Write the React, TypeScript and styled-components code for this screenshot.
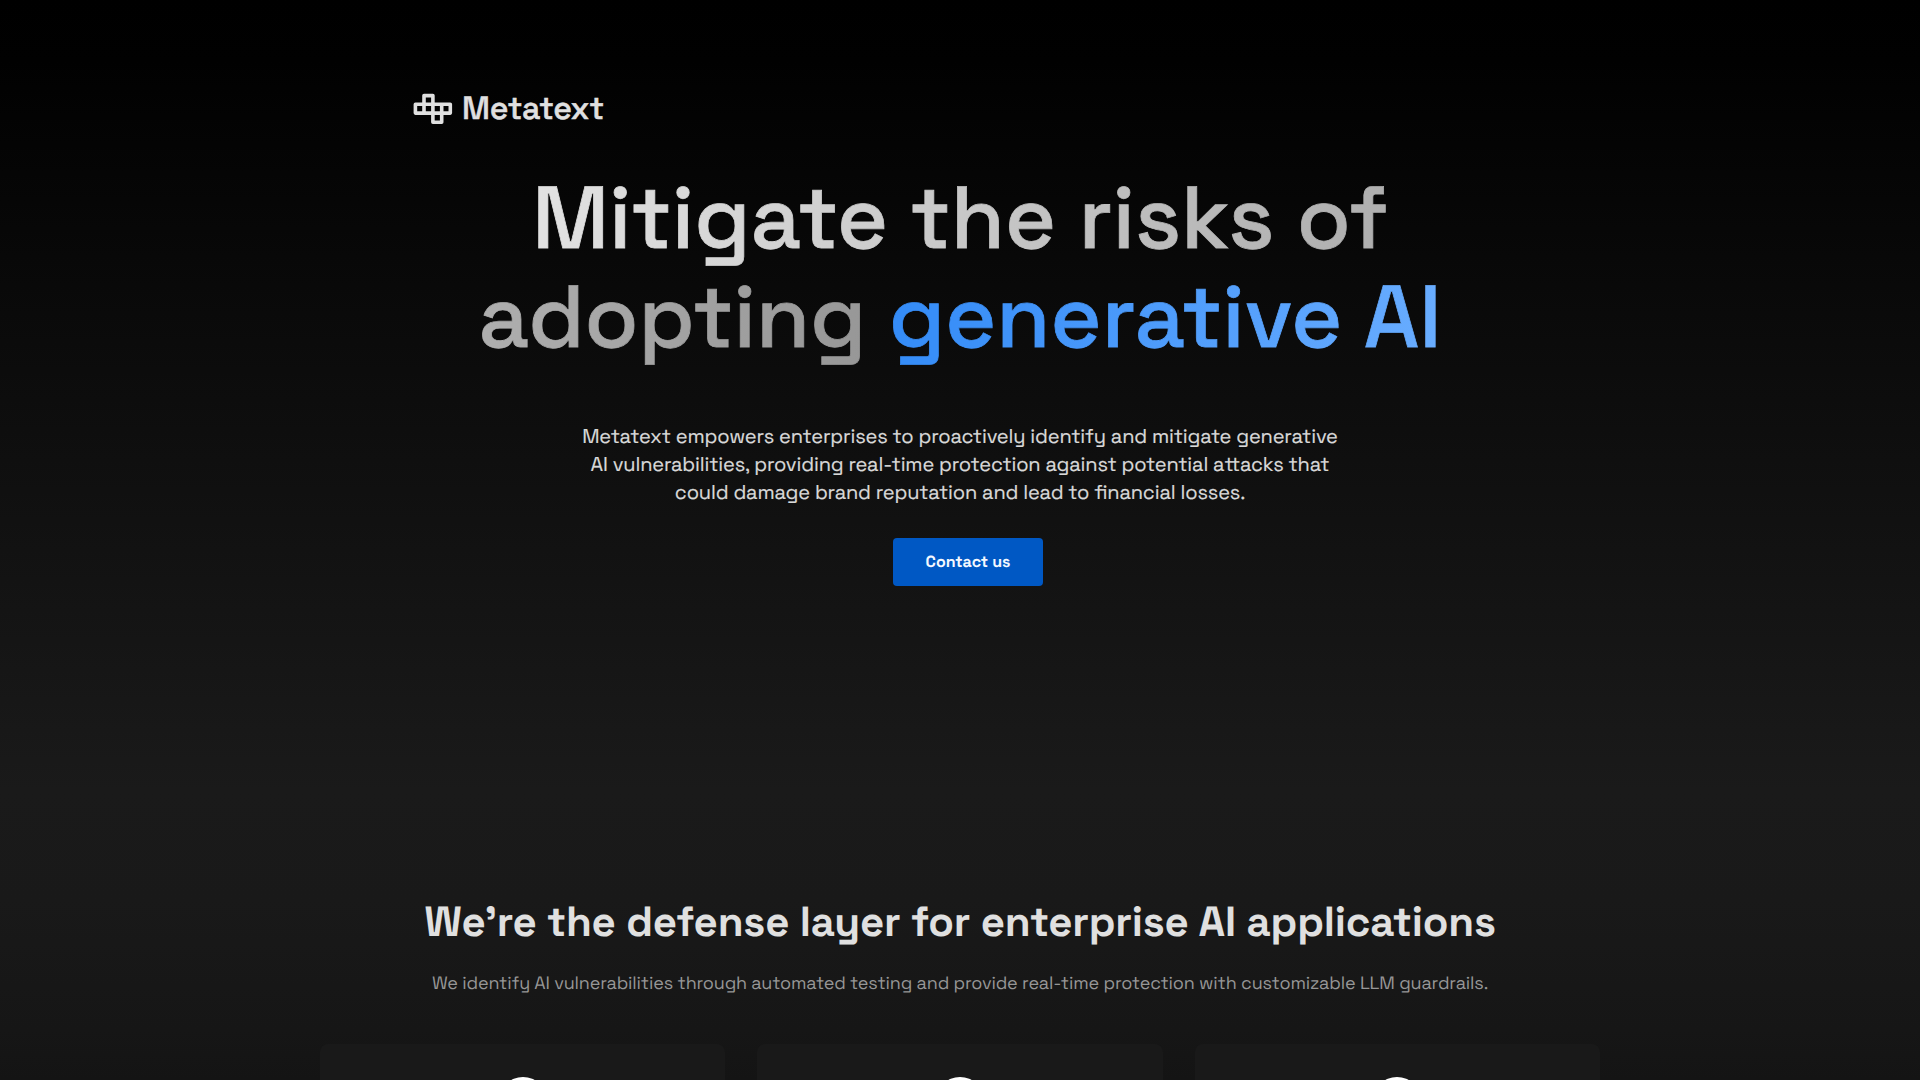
import styled, { createGlobalStyle } from "styled-components";

const GlobalStyle = createGlobalStyle`
  * {
    box-sizing: border-box;
  }

  body {
    margin: 0;
    background: #141414;
    color: #e0e0e0;
    font-family: "Space Grotesk", Inter, "Liberation Sans", sans-serif;
    /* keeps the tt / fi ligatures on tracked text */
    font-feature-settings: "liga" 1;
    text-rendering: geometricPrecision;
    overflow: hidden;
  }

  h1, h2, p {
    margin: 0;
  }
`;

// --- Page ---

const Page = styled.div`
  height: 1080px;
  overflow: hidden;
  background: linear-gradient(
    180deg,
    #000 0,
    #010101 60px,
    #0c0c0c 370px,
    #1a1a1a 790px,
    #191919 900px,
    #161616 1030px,
    #141414 1080px
  );
`;

// One line of centred copy
const Line = styled.span`
  display: block;
  white-space: nowrap;
`;

// --- Hero ---

const Hero = styled.header`
  display: flex;
  flex-direction: column;
  align-items: center;
  height: 844px;
  padding-top: 89px;
`;

const Brand = styled.div`
  display: flex;
  align-items: center;
  gap: 9px;
  width: 1094px;
  height: 40px;
`;

const BrandName = styled.span`
  font-size: 32px;
  font-weight: 500;
  line-height: 40px;
  letter-spacing: -0.2px;
  -webkit-text-stroke: 0.5px currentColor;
`;

const Title = styled.h1`
  margin-top: 39px;
  font-size: 88px;
  font-weight: 500;
  line-height: 99px;
  letter-spacing: -0.07px;
  text-align: center;
  white-space: nowrap;
`;

const Gradient = styled.span<{ $from: string; $to: string }>`
  background: linear-gradient(
    95deg,
    ${(props) => props.$from},
    ${(props) => props.$to}
  );
  background-clip: text;
  -webkit-background-clip: text;
  -webkit-text-stroke: 0.8px transparent;
  color: transparent;
`;

const Lead = styled.p`
  margin-top: 56px;
  font-size: 20px;
  line-height: 28px;
  letter-spacing: -0.16px;
  text-align: center;
  color: #d9d9d9;
  -webkit-text-stroke: 0.2px currentColor;
`;

const Actions = styled.div`
  display: flex;
  margin-top: 32px;
  padding-left: 16px;
`;

const ContactButton = styled.button`
  width: 150px;
  height: 48px;
  padding: 0 0 2px;
  border: none;
  border-radius: 4px;
  background: #0058c4;
  color: #f4f8ff;
  font-family: inherit;
  font-size: 16px;
  font-weight: 700;
  text-rendering: inherit;
  cursor: pointer;
`;

// --- Defense layer ---

const Defense = styled.section`
  display: flex;
  flex-direction: column;
  align-items: center;
  padding-top: 53px;
`;

const SectionTitle = styled.h2`
  font-size: 42px;
  font-weight: 700;
  line-height: 52px;
  letter-spacing: -0.18px;
`;

const SectionText = styled.p`
  margin-top: 21px;
  font-size: 18px;
  font-weight: 400;
  line-height: 28px;
  letter-spacing: -0.16px;
  color: #969696;
`;

const Cards = styled.div`
  display: grid;
  grid-template-columns: repeat(3, 1fr);
  gap: 32px;
  width: 1280px;
  margin-top: 46px;
`;

const Card = styled.article`
  display: flex;
  justify-content: center;
  height: 320px;
  padding-top: 33px;
  border-radius: 8px;
  background: #191919;
`;

const CardBadge = styled.div`
  width: 48px;
  height: 48px;
  border-radius: 50%;
  background: #fff;
`;

const BrandMark = () => (
  <svg width="40" height="32" viewBox="0 0 40 32" fill="none">
    <path
      d="M2.4 11.2H37.3V20.1H2.4ZM11 20.1V2.6H19.9V29.2H28.7V11.2M19.9 29.2V11.2"
      stroke="#e0e0e0"
      strokeWidth="3.6"
      strokeLinejoin="round"
    />
  </svg>
);

const cards = ["testing", "guardrails", "monitoring"];

const App = () => {
  return (
    <Page>
      <GlobalStyle />
      <Hero>
        <Brand>
          <BrandMark />
          <BrandName>Metatext</BrandName>
        </Brand>

        <Title>
          <Gradient $from="#e2e2e2" $to="#979797">
            Mitigate the risks of
            <br />
            adopting
          </Gradient>{" "}
          <Gradient $from="#338bf7" $to="#69adff">
            generative AI
          </Gradient>
        </Title>

        <Lead>
          <Line>
            Metatext empowers enterprises to proactively identify and mitigate
            generative
          </Line>
          <Line>
            AI vulnerabilities, providing real-time protection against potential
            attacks that
          </Line>
          <Line>
            could damage brand reputation and lead to financial losses.
          </Line>
        </Lead>

        <Actions>
          <ContactButton>Contact us</ContactButton>
        </Actions>
      </Hero>

      <Defense>
        <SectionTitle>
          <Line>We’re the defense layer for enterprise AI applications</Line>
        </SectionTitle>
        <SectionText>
          <Line>
            We identify AI vulnerabilities through automated testing and provide
            real-time protection with customizable LLM guardrails.
          </Line>
        </SectionText>
        <Cards>
          {cards.map((card) => (
            <Card key={card}>
              <CardBadge />
            </Card>
          ))}
        </Cards>
      </Defense>
    </Page>
  );
};

export default App;
